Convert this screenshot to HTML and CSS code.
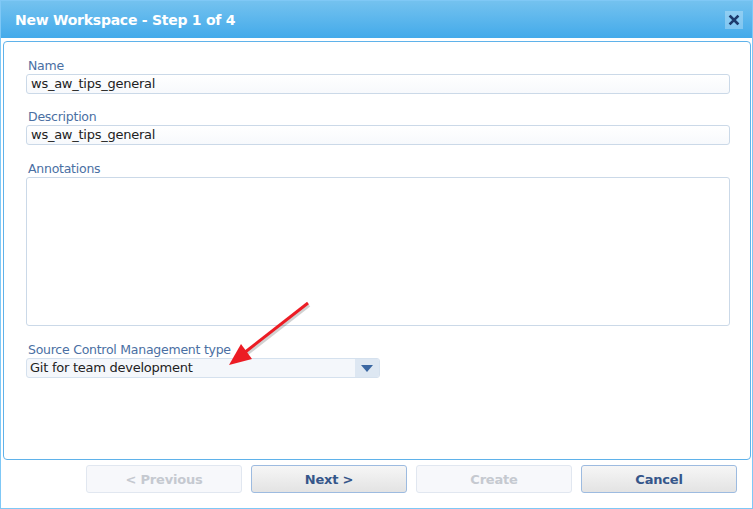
FILE: index.html
```html
<!DOCTYPE html>
<html>
<head>
<meta charset="utf-8">
<link rel="stylesheet" href="styles.css">
</head>
<body>
<div class="window">
  <div class="titlebar">
    <span class="title">New Workspace - Step 1 of 4</span>
    <span class="close">
      <svg width="12" height="12" viewBox="0 0 12 12"><path d="M2.5 2.5 L9.5 9.5 M9.5 2.5 L2.5 9.5" stroke="#1d3a6c" stroke-width="2.6" stroke-linecap="square"/></svg>
    </span>
  </div>
  <div class="panel">
    <div class="field">
      <div class="label">Name</div>
      <div class="input">ws_aw_tips_general</div>
    </div>
    <div class="field">
      <div class="label">Description</div>
      <div class="input">ws_aw_tips_general</div>
    </div>
    <div class="field">
      <div class="label">Annotations</div>
      <div class="textarea"></div>
    </div>
    <div class="field">
      <div class="label">Source Control Management type</div>
      <div class="select">
        <span class="select-value">Git for team development</span>
        <span class="select-btn"><svg width="12" height="7" viewBox="0 0 12 7"><path d="M0 0 H12 L6 7 Z" fill="#3a67a2"/></svg></span>
      </div>
    </div>
  </div>
  <div class="buttons">
    <div class="btn disabled">&lt; Previous</div>
    <div class="btn">Next &gt;</div>
    <div class="btn disabled">Create</div>
    <div class="btn">Cancel</div>
  </div>
  <svg class="arrow" width="753" height="509" viewBox="0 0 753 509">
    <line x1="308" y1="303" x2="244" y2="353" stroke="rgba(0,0,0,0.18)" stroke-width="4" transform="translate(1,2)"/>
    <line x1="308" y1="303" x2="244" y2="353" stroke="#ec1c24" stroke-width="3"/>
    <polygon points="229,365 241,344 252,359" fill="#ec1c24"/>
  </svg>
</div>
</body>
</html>
```
FILE: styles.css
```css
html, body {
  margin: 0;
  padding: 0;
  background: #ffffff;
}
.window {
  position: relative;
  width: 753px;
  height: 509px;
  box-sizing: border-box;
  border: 1px solid #7fc8f6;
  background: #ffffff;
  font-family: "DejaVu Sans", Verdana, sans-serif;
  display: flex;
  flex-direction: column;
}
.titlebar {
  height: 37px;
  background: linear-gradient(#74c2ef, #43aaea);
  display: flex;
  align-items: center;
  justify-content: space-between;
  padding: 0 9px 0 14px;
  flex-shrink: 0;
}
.title {
  color: #ffffff;
  font-weight: bold;
  font-size: 14px;
  letter-spacing: -0.25px;
}
.close {
  width: 18px;
  height: 18px;
  background: rgba(255,255,255,0.28);
  display: flex;
  align-items: center;
  justify-content: center;
}
.panel {
  margin: 3px 1px 0 2px;
  height: 419px;
  box-sizing: border-box;
  border: 1px solid #5fb2ea;
  border-radius: 4px;
  padding: 16px 20px 0 22px;
  flex-shrink: 0;
}
.field {
  margin-bottom: 16px;
}
.field:first-child {
  margin-bottom: 15px;
}
.label {
  height: 16px;
  font-size: 12.5px;
  line-height: 16px;
  color: #4a6fa3;
  padding-left: 2px;
  letter-spacing: -0.25px;
}
.input {
  height: 20px;
  box-sizing: border-box;
  border: 1px solid #cbd9e8;
  border-radius: 3px;
  background: linear-gradient(#ffffff, #f7f9fc);
  font-size: 13px;
  line-height: 18px;
  color: #222222;
  padding-left: 4px;
  letter-spacing: -0.25px;
}
.textarea {
  height: 149px;
  box-sizing: border-box;
  border: 1px solid #cbd9e8;
  border-radius: 3px;
  background: #ffffff;
}
.select {
  width: 354px;
  height: 20px;
  box-sizing: border-box;
  border: 1px solid #d5e1ee;
  border-radius: 3px;
  background: #f4f7fb;
  display: flex;
  align-items: stretch;
  justify-content: space-between;
}
.select-value {
  font-size: 13px;
  line-height: 18px;
  color: #222222;
  padding-left: 3px;
  letter-spacing: -0.25px;
}
.select-btn {
  width: 24px;
  background: #dde7f2;
  border-radius: 0 2px 2px 0;
  display: flex;
  align-items: center;
  justify-content: center;
}
.buttons {
  display: flex;
  justify-content: flex-end;
  gap: 9px;
  padding: 5px 15px 0 0;
}
.btn {
  width: 156px;
  height: 28px;
  box-sizing: border-box;
  border: 1px solid #9dbbe0;
  border-radius: 3px;
  background: linear-gradient(#f6f6f6, #e3e3e3);
  color: #35568a;
  font-weight: bold;
  font-size: 13px;
  display: flex;
  align-items: center;
  justify-content: center;
  letter-spacing: -0.2px;
}
.btn.disabled {
  background: #f7f8fb;
  border-color: #e1e7f0;
  color: #c5c9d0;
}
.arrow {
  position: absolute;
  left: -1px;
  top: -1px;
  pointer-events: none;
}
```
